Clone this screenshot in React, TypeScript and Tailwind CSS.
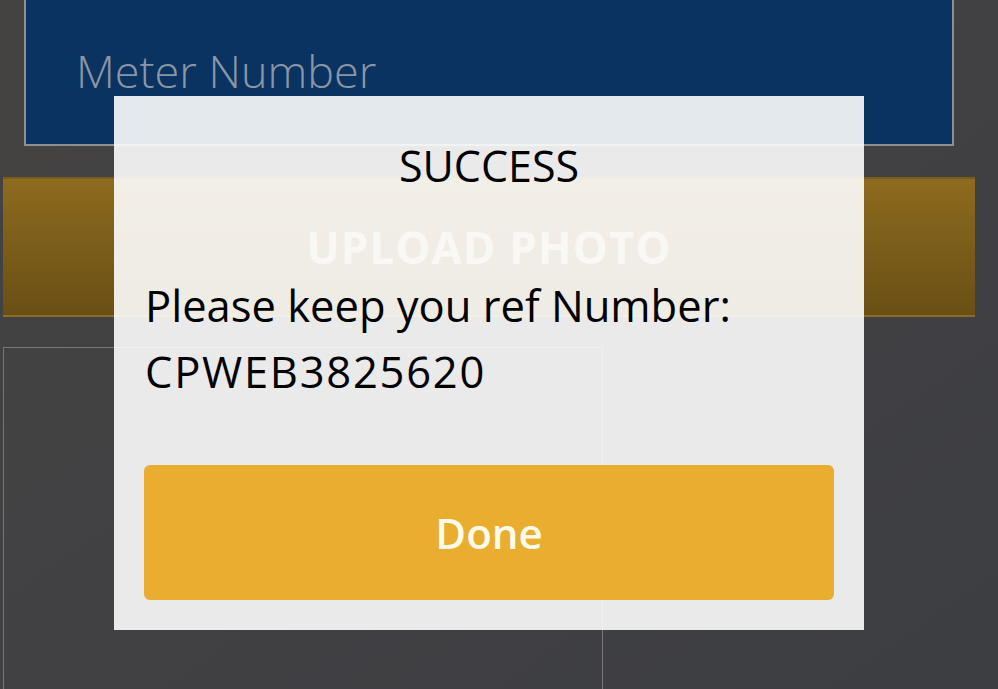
const font = { fontFamily: '"Open Sans", "Noto Sans", sans-serif' };

export default function App() {
    return (
        <div
            className="relative w-[998px] h-[689px] overflow-hidden bg-gradient-to-br from-[#454341] via-[#414144] to-[#3d3e42]"
            style={font}
        >
            {/* form behind the dialog */}
            <div className="flex flex-col">
                <div className="ml-[24px] mr-[44px] mt-[-60px] h-[206px] border-2 border-[#8d8f93] bg-[#0a3362] flex items-end pb-[51px] pl-[50px]">
                    <span className="text-[45px] font-light leading-none text-[#8b96a5]">
                        Meter Number
                    </span>
                </div>
                <div className="mt-[31px] ml-[3px] w-[972px] h-[140px] border-t-2 border-t-[#7a5d1c] border-b-2 border-b-[#8c6d26] bg-gradient-to-b from-[#8d6b1f] to-[#6a4f15] flex items-center justify-center">
                    <span className="text-[44px] font-bold tracking-wide text-white/60">
                        UPLOAD PHOTO
                    </span>
                </div>
                <div className="mt-[30px] ml-[3px] w-[600px] h-[400px] border border-[#77777a]"></div>
            </div>

            {/* success dialog */}
            <div className="absolute left-[114px] top-[96px] w-[750px] h-[534px] bg-white/[0.89] flex flex-col px-[30px] pb-[30px]">
                <p className="mt-[48px] text-center text-[43px] leading-none text-black">
                    SUCCESS
                </p>
                <div className="mt-[86px] pl-[1px] text-[43.5px] leading-[66px] text-black">
                    <p>Please keep you ref Number:</p>
                    <p className="tracking-[0.04em]">CPWEB3825620</p>
                </div>
                <button className="mt-auto h-[135px] w-full rounded-[6px] bg-[#e9ae2f] text-[42px] font-semibold text-[#fffbea]">
                    Done
                </button>
            </div>
        </div>
    );
}
